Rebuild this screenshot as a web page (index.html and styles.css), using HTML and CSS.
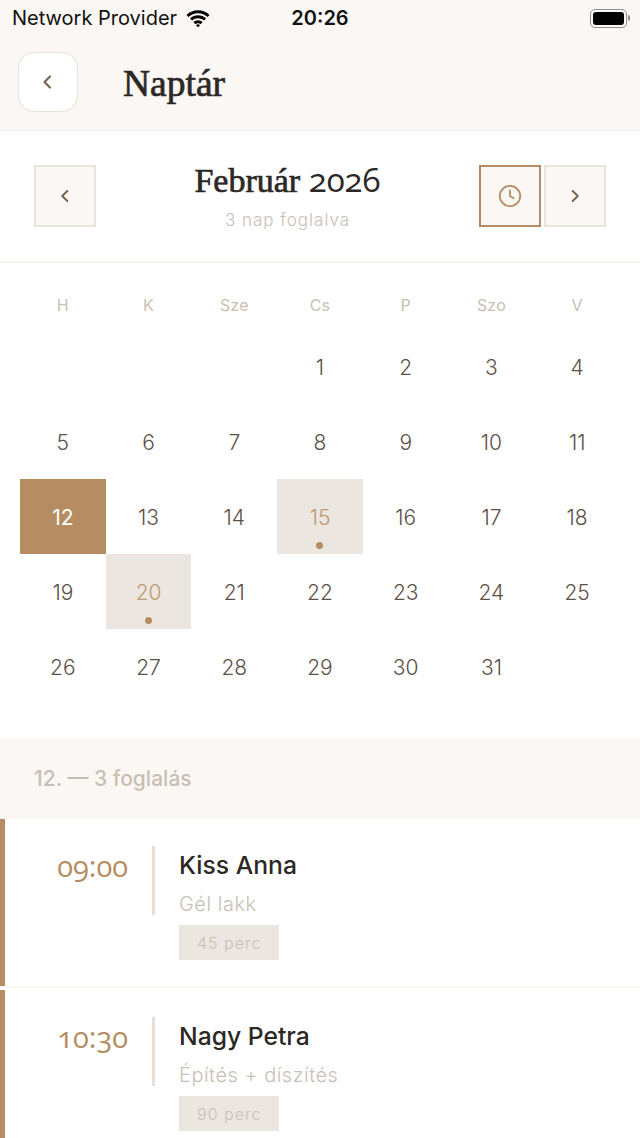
FILE: index.html
```html
<!DOCTYPE html>
<html lang="hu">
<head>
<meta charset="utf-8">
<title>Naptár</title>
<link rel="stylesheet" href="styles.css">
</head>
<body>
<div class="screen">
  <header class="top">
    <div class="status">
      <div class="status-left">
        <span>Network Provider</span>
        <svg class="wifi" viewBox="0 0 26 19" width="26" height="19"><path d="M13 4.2c3.700 0 7 1.400 9.600 3.800l1.900-2.100A17 17 0 0 0 13 1.300 17 17 0 0 0 1.500 5.900l1.900 2.100A14 14 0 0 1 13 4.200z"/><path d="M13 9.300c2.300 0 4.400.9 6 2.300l2-2.100a11.700 11.700 0 0 0-16 0l2 2.100a8.800 8.800 0 0 1 6-2.300z"/><path d="M13 14.200c1 0 1.900.4 2.600 1l2-2.100a6.600 6.600 0 0 0-9.200 0l2 2.100c.7-.6 1.600-1 2.600-1z"/><path d="M13 18.300l2-2.100a2.900 2.900 0 0 0-4 0z"/></svg>
      </div>
      <span class="clock">20:26</span>
      <div class="status-right">
        <span class="battery"><span class="battery-fill"></span></span>
        <span class="battery-cap"></span>
      </div>
    </div>
    <div class="title-row">
      <button class="back" type="button" aria-label="Vissza">
        <svg viewBox="0 0 24 24" width="24" height="24"><path class="chev" d="M14 6.500 8.500 12l5.500 5.500"/></svg>
      </button>
      <h1>Naptár</h1>
    </div>
  </header>

  <section class="month">
    <button class="nav" type="button" aria-label="Előző">
      <svg viewBox="0 0 24 24" width="22" height="22"><path class="chev" d="M14.500 6.500 9 12l5.500 5.500"/></svg>
    </button>
    <div class="month-label">
      <h2>Február <span class="year">2026</span></h2>
      <p>3 nap foglalva</p>
    </div>
    <div class="month-actions">
      <button class="nav nav-active" type="button" aria-label="Idő">
        <svg viewBox="0 0 24 24" width="24" height="24"><circle class="clock-line" cx="12" cy="12" r="10.200"/><path class="clock-line" d="M12 6.500V12l3.500 2.300"/></svg>
      </button>
      <button class="nav" type="button" aria-label="Következő">
        <svg viewBox="0 0 24 24" width="22" height="22"><path class="chev" d="M9.500 6.500 15 12l-5.500 5.500"/></svg>
      </button>
    </div>
  </section>

  <section class="calendar">
    <div class="weekdays">
      <span>H</span><span>K</span><span>Sze</span><span>Cs</span><span>P</span><span>Szo</span><span>V</span>
    </div>
    <div class="days">
      <span class="day"></span><span class="day"></span><span class="day"></span>
      <span class="day">1</span><span class="day">2</span><span class="day">3</span><span class="day">4</span>
      <span class="day">5</span><span class="day">6</span><span class="day">7</span><span class="day">8</span><span class="day">9</span><span class="day">10</span><span class="day">11</span>
      <span class="day selected">12</span><span class="day">13</span><span class="day">14</span><span class="day booked">15<i class="dot"></i></span><span class="day">16</span><span class="day">17</span><span class="day">18</span>
      <span class="day">19</span><span class="day booked">20<i class="dot"></i></span><span class="day">21</span><span class="day">22</span><span class="day">23</span><span class="day">24</span><span class="day">25</span>
      <span class="day">26</span><span class="day">27</span><span class="day">28</span><span class="day">29</span><span class="day">30</span><span class="day">31</span>
    </div>
  </section>

  <div class="list-head">12. — 3 foglalás</div>

  <article class="booking">
    <div class="time">09:00</div>
    <div class="rule"></div>
    <div class="info">
      <div class="name">Kiss Anna</div>
      <div class="service">Gél lakk</div>
      <span class="tag">45 perc</span>
    </div>
  </article>
  <article class="booking">
    <div class="time">10:30</div>
    <div class="rule"></div>
    <div class="info">
      <div class="name">Nagy Petra</div>
      <div class="service">Építés + díszítés</div>
      <span class="tag">90 perc</span>
    </div>
  </article>
</div>
</body>
</html>
```
FILE: styles.css
```css
* { box-sizing: border-box; margin: 0; padding: 0; }

html, body { height: 100%; overflow: hidden; background: #fff; }

body { font-family: Inter, "Liberation Sans", sans-serif; color: #2c2825; }

.screen { height: 1138px; overflow: hidden; background: #fff; }

button { font: inherit; cursor: pointer; }

.chev { fill: none; stroke: #7a6650; stroke-width: 2.200; stroke-linecap: round; stroke-linejoin: round; }

.clock-line { fill: none; stroke: #b68d62; stroke-width: 1.800; stroke-linecap: round; stroke-linejoin: round; }

/* Header with status bar */
.top { height: 131px; background: #fbf7f4; border-bottom: 1px solid #f2efeb; }

.status {
  display: grid;
  grid-template-columns: 1fr auto 1fr;
  align-items: center;
  height: 36px;
  padding: 0 10px 0 12px;
  color: #111;
  font-size: 20px;
}

.status-left { display: flex; align-items: center; gap: 8px; }

.wifi { fill: #000; }

.clock { font-weight: 600; font-size: 20px; padding-right: 2px; }

.status-right { display: flex; align-items: center; justify-content: flex-end; }

.battery {
  display: block;
  width: 37px;
  height: 19px;
  padding: 2px;
  border: 1.500px solid #8f8f8f;
  border-radius: 5px;
}

.battery-fill { display: block; height: 100%; background: #000; border-radius: 3px; }

.battery-cap { width: 2px; height: 6px; margin-left: 1px; background: #8f8f8f; border-radius: 0 2px 2px 0; }

.title-row { display: flex; align-items: center; gap: 45px; padding: 16px 18px 0; }

.back {
  display: flex;
  align-items: center;
  justify-content: center;
  width: 60px;
  height: 60px;
  background: #fff;
  border: 1.500px solid #e8e2da;
  border-radius: 16px;
}

h1 {
  position: relative;
  top: 1px;
  font-family: "Liberation Serif", serif;
  font-weight: 400;
  font-size: 37.500px;
  -webkit-text-stroke: 0.700px #2c2825;
  color: #2c2825;
}

/* Month switcher */
.month {
  display: flex;
  align-items: center;
  justify-content: space-between;
  height: 132px;
  padding: 0 34px;
  border-bottom: 2px solid #f6f3ef;
}

.nav {
  display: flex;
  align-items: center;
  justify-content: center;
  width: 62px;
  height: 62px;
  background: #fbf7f4;
  border: 2px solid #ebe4da;
}

.nav-active { border-color: #b68d62; }

.month-actions { display: flex; gap: 3px; }

.month-label { flex: 1; text-align: center; }

h2 {
  font-family: "Liberation Serif", serif;
  font-weight: 400;
  font-size: 34px;
  line-height: 36px;
  -webkit-text-stroke: 0.700px #2c2825;
  color: #2c2825;
}

.year {
  font-family: "Open Sans", serif;
  font-size: 33px;
  font-weight: 500;
  font-feature-settings: "onum";
  -webkit-text-stroke: 0;
}

.month-label p { margin-top: 11px; font-size: 17px; font-weight: 300; letter-spacing: 1px; color: #c8c0b6; }

/* Calendar grid */
.calendar { padding: 30px 20px 35px; }

.weekdays { display: grid; grid-template-columns: repeat(7, 1fr); height: 36px; }

.weekdays span { text-align: center; font-size: 16px; font-weight: 400; letter-spacing: 0.200px; line-height: 24px; color: #c8bfb2; }

.days { display: grid; grid-template-columns: repeat(7, 1fr); grid-auto-rows: 75px; }

.day {
  position: relative;
  display: flex;
  align-items: center;
  justify-content: center;
  padding-top: 2px;
  font-size: 21px;
  font-weight: 300;
  color: #5d5048;
}

.selected { background: #b68d62; color: #fff; font-weight: 400; }

.booked { background: #ebe6df; color: #c09a74; }

.dot {
  position: absolute;
  left: 50%;
  bottom: 5px;
  width: 7px;
  height: 7px;
  margin-left: -3.500px;
  border-radius: 50%;
  background: #b68d62;
}

/* Bookings of the chosen day */
.list-head {
  height: 80px;
  padding-left: 34px;
  background: #fbf7f4;
  font-size: 21px;
  font-weight: 500;
  line-height: 80px;
  color: #c8bfb2;
}

.booking {
  display: flex;
  align-items: flex-start;
  height: 167px;
  margin-bottom: 4px;
  padding: 27px 0 0;
  border-left: 5px solid #b68d62;
  background: #fff;
  box-shadow: 0 2px 0 #f9f7f4;
}

.time {
  width: 123px;
  margin-top: 2px;
  text-align: right;
  font-family: "Open Sans", serif;
  font-weight: 500;
  font-size: 29px;
  font-feature-settings: "onum";
  line-height: 36px;
  color: #b68d62;
}

.rule { width: 3px; height: 69px; margin-left: 24px; background: #e9dfd6; }

.info { margin-left: 24px; }

.name { font-size: 24.700px; font-weight: 500; line-height: 38px; color: #2c2825; }

.service { margin-top: 2px; font-size: 20px; font-weight: 300; line-height: 36px; letter-spacing: 0.500px; color: #c8c0b6; }

.tag {
  display: inline-block;
  height: 35px;
  margin-top: 3px;
  padding: 0 18px;
  background: #ebe6df;
  font-size: 16px;
  font-weight: 300;
  line-height: 36px;
  letter-spacing: 1px;
  color: #c8c0b6;
}
```
